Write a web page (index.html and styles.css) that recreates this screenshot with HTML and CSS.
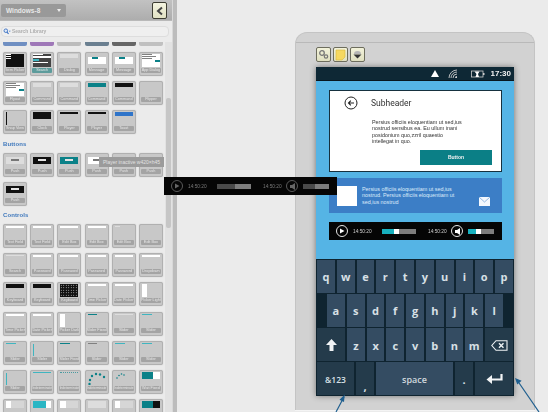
FILE: index.html
```html
<html>
<head>
    <title>Windows-8 wireframes</title>
    <link rel="stylesheet" href="styles.css">
</head>
<body>
<div class="app">
    <div class="sidebar">
        <div class="toolbar">
            <div class="select">Windows-8<span class="select-dot"></span></div>
            <div class="collapse">
                <svg width="8" height="10" viewBox="0 0 8 10"><path d="M6 1.5 2 5l4 3.5" fill="none" stroke="#444" stroke-width="2"/></svg>
            </div>
        </div>
        <div class="search-wrap">
            <div class="search">
                <svg width="8" height="7" viewBox="0 0 10 9"><circle cx="3.5" cy="3.5" r="2.3" fill="#dfe9f7" stroke="#3f74c4" stroke-width="1.2"/><path d="M5 5.2 7 7.6" stroke="#3f74c4" stroke-width="1.4"/><path d="M7.5 3.5h2.2L8.6 5z" fill="#3f74c4"/></svg>
                Search Library
            </div>
        </div>
        <div class="lib">
            <div class="lib-list">
                <div class="grid peek">
                    <div class="peek-item c1"></div>
                    <div class="peek-item c2"></div>
                    <div class="peek-item c3"></div>
                    <div class="peek-item c4"></div>
                    <div class="peek-item c5"></div>
                    <div class="peek-item c6"></div>
                </div>

                <div class="grid">
                    <div class="thumb"><div class="pv bk"><i class="wh h1 w3"></i><i class="wh h1 w3"></i><i class="wh h1 w3"></i></div><div class="lb">Item Picker</div></div>
                    <div class="thumb"><div class="pv dk"><i class="wh h1 w6"></i><i class="wh"></i><i class="cy w3"></i><i class="wh h1 w9"></i></div><div class="lb te">Search</div></div>
                    <div class="thumb"><div class="pv"><i class="lt h4"></i></div><div class="lb">Dialog</div></div>
                    <div class="thumb"><div class="pv"><i class="wh h6 mid msg"></i></div><div class="lb">Message</div></div>
                    <div class="thumb"><div class="pv"><i class="wh h6 mid msg"></i></div><div class="lb">Message</div></div>
                    <div class="thumb"><div class="pv wh"><i class="gr h1 w6"></i><i class="gr h1 w9"></i><i class="gr h1 w6"></i><i class="te w3 right"></i></div><div class="lb">App Dialog</div></div>
                </div>
                <div class="grid">
                    <div class="thumb"><div class="pv wh"><i class="gr h1 w6"></i><i class="gr h1 w9"></i><i class="gr h1 w6"></i><i class="te w3 right"></i></div><div class="lb">Flyout</div></div>
                    <div class="thumb"><div class="pv"><i class="lt h4"></i></div><div class="lb">Command</div></div>
                    <div class="thumb"><div class="pv"><i class="lt h4"></i></div><div class="lb">Command</div></div>
                    <div class="thumb"><div class="pv"><i class="te h4"></i></div><div class="lb">Command</div></div>
                    <div class="thumb"><div class="pv"><i class="bk h4"></i></div><div class="lb">Command</div></div>
                    <div class="thumb"><div class="pv"></div><div class="lb">Flipper</div></div>
                </div>
                <div class="grid">
                    <div class="thumb"><div class="pv"><i class="bk snap"></i></div><div class="lb">Snap View</div></div>
                    <div class="thumb"><div class="pv"><i class="bk h6"></i></div><div class="lb">Clock</div></div>
                    <div class="thumb"><div class="pv"><i class="bk"></i></div><div class="lb">Player</div></div>
                    <div class="thumb"><div class="pv"><i class="bk"></i></div><div class="lb">Player</div></div>
                    <div class="thumb"><div class="pv"><i class="bl h4"></i></div><div class="lb">Toast</div></div>
                </div>

                <h4 class="group">Buttons</h4>
                <div class="grid">
                    <div class="thumb"><div class="pv"><i class="lt h6 btn"></i></div><div class="lb">Push</div></div>
                    <div class="thumb"><div class="pv"><i class="bk h6 btn"></i></div><div class="lb">Push</div></div>
                    <div class="thumb"><div class="pv"><i class="te h6 btn"></i></div><div class="lb">Push</div></div>
                    <div class="thumb"><div class="pv"><i class="wh h6 btn"></i></div><div class="lb">Push</div></div>
                    <div class="thumb"><div class="pv"><i class="bk h6 btn"></i></div><div class="lb">Push</div></div>
                    <div class="thumb"><div class="pv"><i class="lt h6 btn"></i></div><div class="lb">Push</div></div>
                    <div class="thumb"><div class="pv"><i class="bk h6 btn"></i></div><div class="lb">Push</div></div>
                </div>

                <h4 class="group">Controls</h4>
                <div class="grid">
                    <div class="thumb"><div class="pv"><i class="wh"></i></div><div class="lb">Text Field</div></div>
                    <div class="thumb"><div class="pv"><i class="wh"></i></div><div class="lb">Text Field</div></div>
                    <div class="thumb"><div class="pv"><i class="wh"></i></div><div class="lb">Edit Box</div></div>
                    <div class="thumb"><div class="pv"><i class="wh"></i></div><div class="lb">Edit Box</div></div>
                    <div class="thumb"><div class="pv"><i class="lt h1 w3"></i></div><div class="lb">Edit Box</div></div>
                    <div class="thumb"><div class="pv"></div><div class="lb">Edit Box</div></div>
                </div>
                <div class="grid">
                    <div class="thumb"><div class="pv"><i class="lt h1"></i></div><div class="lb">Search</div></div>
                    <div class="thumb"><div class="pv"><i class="wh"></i></div><div class="lb">Password</div></div>
                    <div class="thumb"><div class="pv"><i class="wh"></i></div><div class="lb">Password</div></div>
                    <div class="thumb"><div class="pv"><i class="wh"></i></div><div class="lb">Password</div></div>
                    <div class="thumb"><div class="pv"><i class="wh"></i></div><div class="lb">Password</div></div>
                    <div class="thumb"><div class="pv"><i class="wh"></i></div><div class="lb">Dropdown</div></div>
                </div>
                <div class="grid">
                    <div class="thumb"><div class="pv"><i class="bk h4"></i></div><div class="lb">Keyboard</div></div>
                    <div class="thumb"><div class="pv"><i class="bk h4"></i></div><div class="lb">Keyboard</div></div>
                    <div class="thumb"><div class="pv bk keys"></div><div class="lb">Keyboard</div></div>
                    <div class="thumb"><div class="pv"><i class="wh"></i></div><div class="lb">Time Picker</div></div>
                    <div class="thumb"><div class="pv"><i class="wh"></i></div><div class="lb">Date Picker</div></div>
                    <div class="thumb"><div class="pv"><i class="wh pick"></i></div><div class="lb">Picker Light</div></div>
                </div>
                <div class="grid">
                    <div class="thumb"><div class="pv"><i class="wh"></i></div><div class="lb">Time Picker</div></div>
                    <div class="thumb"><div class="pv"><i class="wh"></i></div><div class="lb">Date Picker</div></div>
                    <div class="thumb"><div class="pv"><i class="wh pick"></i></div><div class="lb">Picker Dark</div></div>
                    <div class="thumb"><div class="pv"><i class="te h1 w6"></i></div><div class="lb">Slider Fixed</div></div>
                    <div class="thumb"><div class="pv"><i class="lt h1"></i></div><div class="lb">Slider</div></div>
                    <div class="thumb"><div class="pv"><i class="cy h1 w6"></i></div><div class="lb">Slider</div></div>
                </div>
                <div class="grid">
                    <div class="thumb"><div class="pv"><i class="cy h1 w6"></i></div><div class="lb">Slider</div></div>
                    <div class="thumb"><div class="pv"><i class="cy vert"></i></div><div class="lb">Slider</div></div>
                    <div class="thumb"><div class="pv"><i class="te h1 w6"></i></div><div class="lb">Slider Fixed</div></div>
                    <div class="thumb"><div class="pv"><i class="gr h1 w6"></i></div><div class="lb">Slider</div></div>
                    <div class="thumb"><div class="pv"><i class="cy h1 w6"></i></div><div class="lb">Slider</div></div>
                    <div class="thumb"><div class="pv"><i class="cy h1 w6"></i></div><div class="lb">Slider</div></div>
                </div>
                <div class="grid">
                    <div class="thumb"><div class="pv"><i class="cy vert"></i></div><div class="lb">Slider</div></div>
                    <div class="thumb"><div class="pv"><i class="cy h1"></i></div><div class="lb tiny">Indeterminate</div></div>
                    <div class="thumb"><div class="pv"><i class="dots"></i></div><div class="lb tiny">Indeterminate</div></div>
                    <div class="thumb"><div class="pv"><svg width="18" height="14" viewBox="0 0 18 14"><g fill="#0b8188"><circle cx="1.5" cy="12" r="1.2"/><circle cx="2" cy="8" r="1.2"/><circle cx="4" cy="4" r="1.2"/><circle cx="8" cy="2" r="1.2"/><circle cx="12" cy="2.500" r="1.2"/><circle cx="16" cy="5" r="1.2"/></g></svg></div><div class="lb tiny">Indeterminate</div></div>
                    <div class="thumb"><div class="pv"><svg width="18" height="14" viewBox="0 0 18 14"><g fill="#0b8188"><circle cx="2" cy="6" r=".8"/><circle cx="4" cy="3.500" r=".8"/><circle cx="6.500" cy="2" r=".8"/><circle cx="9" cy="3" r=".8"/></g></svg></div><div class="lb tiny">Indeterminate</div></div>
                    <div class="thumb"><div class="pv"><i class="wh h6 meter"><b></b></i></div><div class="lb">Wait Fixed</div></div>
                </div>
                <div class="grid">
                    <div class="thumb"><div class="pv"><i class="lt h6 meter soft"><b class="white-cap"></b></i></div></div>
                    <div class="thumb"><div class="pv"><i class="wh h6 meter"><b class="cyan"></b></i></div></div>
                    <div class="thumb"><div class="pv"><i class="lt h6 meter soft"><b class="white-cap"></b></i></div></div>
                    <div class="thumb"><div class="pv"><i class="lt h6"></i></div></div>
                    <div class="thumb"><div class="pv"><i class="lt h6 meter soft"><b class="white-cap"></b></i></div></div>
                    <div class="thumb"><div class="pv"><i class="bk h6 meter"><b></b></i></div></div>
                </div>
            </div>
            <div class="scroll"><div class="scroll-thumb"></div></div>
        </div>
    </div>
    <div class="divider"></div>

    <div class="canvas">
        <div class="device">
            <div class="device-head"></div>
            <div class="device-body">
                <div class="tools">
                    <div class="tool"><svg width="11" height="11" viewBox="0 0 11 11"><circle cx="4" cy="4" r="2.300" fill="none" stroke="#777" stroke-width="1.300"/><circle cx="8" cy="7.500" r="1.700" fill="none" stroke="#777" stroke-width="1.200"/></svg></div>
                    <div class="tool"><svg width="11" height="12" viewBox="0 0 11 12"><path d="M1 1h9v7l-3 3H1z" fill="#f6d860" stroke="#d9b93d" stroke-width=".6"/></svg></div>
                    <div class="tool"><svg width="11" height="11" viewBox="0 0 11 11"><path d="M2 5a3.500 3 0 0 1 7 0z" fill="#b5b5b5"/><path d="M1.500 5.500h8L5.500 9.500z" fill="#333"/></svg></div>
                </div>
                <div class="screen">
                    <div class="status">
                        <svg width="8" height="7" viewBox="0 0 8 7"><path d="M4 0 8 7H0z" fill="#fff"/></svg>
                        <svg class="st-wifi" width="10" height="9" viewBox="0 0 10 9"><g fill="none" stroke="#ccc" stroke-width=".9"><path d="M1 9a8 8 0 0 1 8-8"/><path d="M3 9a6 6 0 0 1 6-6"/><path d="M5 9a4 4 0 0 1 4-4"/></g><path d="M7 9a2 2 0 0 1 2-2v2z" fill="#ccc"/></svg>
                        <svg class="st-batt" width="14" height="8" viewBox="0 0 14 8"><rect x=".5" y="1" width="11.500" height="6" fill="none" stroke="#ccc" stroke-width=".8"/><rect x="12" y="3" width="1.500" height="2" fill="#ccc"/><path d="M3.500 1.500h5L7 4l1 3H4.500L5.500 4z" fill="#fff"/></svg>
                        <span class="clock">17:30</span>
                    </div>
                    <div class="blue">
                        <div class="card">
                            <div class="card-head">
                                <svg width="14" height="14" viewBox="0 0 14 14"><circle cx="7" cy="7" r="6" fill="none" stroke="#222" stroke-width="1"/><path d="M10 7H4.500M6.800 4.700 4.500 7l2.300 2.300" fill="none" stroke="#222" stroke-width="1.100"/></svg>
                                <span class="subheader">Subheader</span>
                            </div>
                            <p class="card-text">Persius officiis eloquentiam ut sed,ius nostrud sensibus ea. Eu ullum inani posidonium quo,zzril quaestio intellegat in quo.</p>
                            <div class="card-foot"><div class="button">Button</div></div>
                        </div>
                        <div class="panel">
                            <div class="panel-img"></div>
                            <p class="panel-text">Persius officiis eloquentiam ut sed,ius nostrud. Persius officiis eloquentiam ut sed,ius nostrud</p>
                            <svg class="mail" width="11" height="9" viewBox="0 0 11 9"><rect width="11" height="9" fill="#f4f8fd"/><path d="M0 0l5.500 5L11 0" fill="none" stroke="#7fa8d8" stroke-width=".8"/></svg>
                        </div>
                        <div class="player">
                            <span class="p-icon"><svg width="6" height="6" viewBox="0 0 6 6"><path d="M1 .5 5.500 3 1 5.500z" fill="#fff"/></svg></span>
                            <span class="p-time">14:50:20</span>
                            <span class="p-bar long"><b></b><u></u></span>
                            <span class="p-time second">14:50:20</span>
                            <span class="p-icon"><svg width="7" height="7" viewBox="0 0 7 7"><path d="M6 0v7L3 5H1V2h2z" fill="#fff"/></svg></span>
                            <span class="p-bar short"><b></b><u></u></span>
                        </div>
                    </div>
                    <div class="keyboard">
                        <div class="kb-row">
                            <span class="key">q</span><span class="key">w</span><span class="key">e</span><span class="key">r</span><span class="key">t</span><span class="key">y</span><span class="key">u</span><span class="key">i</span><span class="key">o</span><span class="key">p</span>
                        </div>
                        <div class="kb-row home">
                            <span class="key">a</span><span class="key">s</span><span class="key">d</span><span class="key">f</span><span class="key">g</span><span class="key">h</span><span class="key">j</span><span class="key">k</span><span class="key">l</span>
                        </div>
                        <div class="kb-row">
                            <span class="key fn wide"><svg width="11" height="12" viewBox="0 0 11 12"><path d="M5.500 0 11 6H7.500v6h-4V6H0z" fill="#f0f3f5"/></svg></span>
                            <span class="key">z</span><span class="key">x</span><span class="key">c</span><span class="key">v</span><span class="key">b</span><span class="key">n</span><span class="key">m</span>
                            <span class="key fn wide"><svg width="17" height="11" viewBox="0 0 17 11"><path d="M5 .7h11v9.600H5L.8 5.500z" fill="none" stroke="#eef2f4" stroke-width="1.100"/><path d="M8 3.200l4.500 4.600M12.500 3.200 8 7.800" stroke="#eef2f4" stroke-width="1.400"/></svg></span>
                        </div>
                        <div class="kb-row">
                            <span class="key fn sym">&amp;123</span>
                            <span class="key fn punct low">,</span>
                            <span class="key space">space</span>
                            <span class="key fn punct">.</span>
                            <span class="key fn enter"><svg width="17" height="10" viewBox="0 0 17 10"><path d="M15.500 0v5.500H4" fill="none" stroke="#f2f4f5" stroke-width="2.200"/><path d="M6 1 .5 5.500 6 10z" fill="#f2f4f5"/></svg></span>
                        </div>
                    </div>
                </div>
            </div>
        </div>
    </div>

    <svg class="arrows" width="548" height="412" viewBox="0 0 548 412">
        <g stroke="#1f5f8f" stroke-width="1.200" fill="#1f5f8f">
            <path d="M336 412 344 397" fill="none"/>
            <path d="M344 396l-.5 5-3-1.500z"/>
            <path d="M539 412 517 380" fill="none"/>
            <path d="M516 379l4.500 2-3 2.500z"/>
        </g>
    </svg>

    <div class="tooltip">Player inactive w420×h45</div>

    <div class="player ghost">
        <span class="p-icon"><svg width="6" height="6" viewBox="0 0 6 6"><path d="M1 .5 5.500 3 1 5.500z" fill="#666"/></svg></span>
        <span class="p-time">14:50:20</span>
        <span class="p-bar long"><b></b></span>
        <span class="p-time second">14:50:20</span>
        <span class="p-icon"><svg width="7" height="7" viewBox="0 0 7 7"><path d="M6 0v7L3 5H1V2h2z" fill="#666"/></svg></span>
        <span class="p-bar short"><b></b></span>
    </div>
</div>
</body>
</html>
```

FILE: styles.css
```css
html, body { margin: 0; padding: 0; width: 548px; height: 412px; overflow: hidden; }
body { font-family: "Liberation Sans", Arial, sans-serif; background-color: #ebebeb; }
.app { position: relative; display: flex; width: 548px; height: 412px; overflow: hidden; filter: blur(0.4px); }

/* library */
.sidebar { width: 172px; flex: none; background-color: #ebebeb; display: flex; flex-direction: column; }
.toolbar { height: 21px; flex: none; display: flex; align-items: center; justify-content: space-between; padding: 0 5px 0 1px; box-sizing: border-box; background: linear-gradient(#c2c2c2, #adadad); border-bottom: 1px solid #b9b9b9; }
.select { width: 65px; height: 13px; line-height: 13px; margin-top: 1px; box-sizing: border-box; padding-left: 5px; display: flex; justify-content: space-between; align-items: center; background-color: #999999; border-radius: 2px; color: #e8e8e8; font-size: 6.500px; font-weight: bold; }
.select-dot { width: 0; height: 0; margin-right: 5px; border: 2px solid transparent; border-top: 3px solid #eeeeee; border-bottom: 0; }
.collapse { width: 15px; height: 17px; margin-top: 1px; box-sizing: border-box; display: flex; align-items: center; justify-content: center; background: linear-gradient(#f4f4e0, #e2e2c4); border: 1px solid #3d3d32; border-radius: 2px; }
.search-wrap { padding: 5px 3px 0 1px; flex: none; }
.search { height: 9px; display: flex; align-items: center; gap: 1px; padding-left: 1px; background-color: #efefef; border: 1px solid #dddddd; border-radius: 4px; color: #adadad; font-size: 4.900px; font-weight: bold; }

.lib { flex: 1; display: flex; min-height: 0; padding-top: 5px; }
.lib-list { width: 165px; flex: none; padding-left: 3px; box-sizing: border-box; }
.grid { display: grid; grid-template-columns: repeat(6, 24px); column-gap: 3.200px; row-gap: 5.200px; margin-bottom: 5.200px; }
.peek { margin-bottom: 6px; }
.peek-item { height: 4px; border-radius: 0 0 2px 2px; background-color: #b4b4b4; }
.peek-item.c1 { background-color: #6f8fc2; }
.peek-item.c2 { background-color: #9f78b8; }
.peek-item.c3 { background-color: #bcbcbc; }
.peek-item.c4 { background-color: #6a7f90; }
.peek-item.c5 { background-color: #666666; }
.peek-item.c6 { background-color: #c0c0c0; }

.group { margin: 0 0 4px; font-size: 6px; line-height: 9px; letter-spacing: 0.1px; color: #3f78bc; }

.thumb { height: 24px; box-sizing: border-box; padding: 1px 2px 2px; display: flex; flex-direction: column; border: 1px solid #b0b0b0; border-radius: 2px; background-color: #c8c8c8; box-shadow: 0 0 1px #b0b0b0; }
.pv { flex: 1; min-height: 0; overflow: hidden; position: relative; margin-bottom: 1px; }
.pv i { display: block; height: 2px; margin-bottom: 1px; }
.pv svg { display: block; }
.lb { height: 5px; flex: none; margin: 0 -1px; background-color: #a4a4a4; color: #e6e6e6; font-size: 3.800px; line-height: 5px; text-align: center; white-space: nowrap; border-radius: 1px; }
.lb.tiny { font-size: 3.200px; }
.lb.te { background-color: #5d9c9c; }

.wh { background-color: #ffffff; }
.bk { background-color: #111111; }
.dk { background-color: #444444; }
.lt { background-color: #dddddd; }
.te { background-color: #0b8188; }
.cy { background-color: #3fb5c0; }
.gr { background-color: #808080; }
.bl { background-color: #2f74c9; }
.pv i.h1 { height: 1px; }
.pv i.h4 { height: 4px; }
.pv i.h6 { height: 7px; }
.w3 { width: 30%; }
.w6 { width: 55%; }
.w9 { width: 80%; }
.right { margin-left: auto; }
.pv i.mid { margin-top: 1px; }
.pv i.msg::after { content: ""; display: block; width: 6px; height: 2px; margin: 3px 0 0 4px; background-color: #0b8188; }
.pv i.btn { margin: 2px 0 0; }
.pv i.btn::after { content: ""; display: block; width: 8px; height: 2px; margin: 0 auto; position: relative; top: 2.500px; background-color: #e4e4e4; }
.pv i.lt.btn::after, .pv i.wh.btn::after { background-color: #777777; }
.pv i.snap { width: 1px; height: 15px; }
.pv i.vert { width: 1px; height: 14px; margin-top: 1px; }
.pv i.pick { width: 5px; height: 15px; }
.pv i.dots { height: 1px; border-top: 1px dotted #4a9aa0; }
.pv.keys { background-image: radial-gradient(#dddddd 0.6px, transparent 0.7px); background-size: 2.500px 2.500px; }
.meter { display: flex; }
.meter b { display: block; width: 60%; height: 100%; background-color: #0b8188; }
.meter b.cyan { background-color: #2bb6c4; width: 70%; }
.meter b.white-cap { background-color: #ffffff; width: 30%; }
.meter.soft { background-color: #d6d6d6; }

.scroll { width: 7px; flex: none; background-color: #e2e2e2; }
.scroll-thumb { width: 5px; height: 130px; margin: 56px 0 0 1px; background-color: #c6c6c6; border-radius: 2px; }

.divider { width: 5px; flex: none; background-color: #bcbcbc; border-left: 1px solid #d8d8d8; box-sizing: border-box; }

/* canvas */
.canvas { flex: 1; min-width: 0; padding: 32px 0 0 118px; background-color: #ebebeb; box-sizing: border-box; }
.device { width: 240px; height: 378px; box-sizing: border-box; background-color: #d2d2d2; border: 1px solid #c4c4c4; border-bottom: 0; border-radius: 12px 12px 0 0; box-shadow: 0 1px 0 #f4f4f4; }
.device-head { height: 9px; border-bottom: 1px solid #b9b9b9; }
.device-body { padding: 4px 0 0 20px; }
.tools { display: flex; gap: 2px; height: 15px; margin-bottom: 5px; }
.tool { width: 15px; height: 15px; box-sizing: border-box; display: flex; align-items: center; justify-content: center; background: linear-gradient(#f2f2da, #e0e0c0); border: 1px solid #6d6d5d; border-radius: 2px; }

.screen { width: 198px; height: 329px; display: flex; flex-direction: column; box-shadow: 0 0 6px rgba(0, 0, 0, 0.45); }
.status { height: 14px; flex: none; box-sizing: border-box; display: flex; align-items: center; justify-content: flex-end; padding-right: 3px; background-color: #0e2835; border-bottom: 1px solid #07161e; }
.st-wifi { margin-left: 9px; }
.st-batt { margin-left: 13px; }
.clock { margin-left: 6px; color: #f2f2f2; font-size: 8px; font-weight: bold; }

.blue { flex: none; height: 178px; box-sizing: border-box; padding: 9px 12px 0 13px; background-color: #55b4e5; display: flex; flex-direction: column; }
.card { height: 82px; flex: none; box-sizing: border-box; background-color: #ffffff; border: 1px solid #16313f; padding: 5px 9px 0 14px; display: flex; flex-direction: column; }
.card-head { display: flex; align-items: center; height: 14px; }
.subheader { margin-left: 13px; font-family: Roboto, "Liberation Sans", sans-serif; font-size: 8.500px; color: #333333; }
.card-text { margin: 9px 0 0 28px; width: 90px; color: #333333; font-size: 5.400px; line-height: 6.300px; }
.card-foot { display: flex; justify-content: flex-end; margin-top: 6px; }
.button { width: 72px; height: 15px; line-height: 15px; text-align: center; background-color: #0b7f86; color: #f2f2f2; font-size: 5px; font-weight: bold; }

.panel { margin-top: 6px; height: 35px; flex: none; box-sizing: border-box; display: flex; padding: 8px 12px 0 8px; background-color: #3c7ec6; position: relative; }
.panel-img { width: 20px; height: 20px; flex: none; background-color: #ffffff; }
.panel-text { margin: 0 0 0 5px; width: 96px; color: #dcebfa; font-size: 5.400px; line-height: 6.300px; }
.mail { margin: 11px 0 0 auto; }

.player { width: 173px; height: 18px; flex: none; margin-top: 9px; box-sizing: border-box; display: flex; align-items: center; padding-left: 7px; background-color: #050505; }
.p-icon { width: 12px; height: 12px; flex: none; box-sizing: border-box; display: flex; align-items: center; justify-content: center; border: 1px solid #e6e6e6; border-radius: 50%; }
.p-time { width: 18px; margin-left: 5px; flex: none; color: #cfcfcf; font-size: 4.800px; white-space: nowrap; }
.p-time.second { margin: 0 5px 0 12px; }
.p-bar { display: flex; height: 5px; flex: none; margin-left: 11px; background-color: #7d7d7d; }
.p-bar b { display: block; background-color: #17b1bf; }
.p-bar u { display: block; width: 5px; background-color: #ffffff; }
.p-bar.long { width: 34px; }
.p-bar.long b { width: 12px; }
.p-bar.short { width: 26px; margin-left: 5px; }
.p-bar.short b { width: 8px; }

.keyboard { flex: 1; min-height: 0; box-sizing: border-box; padding: 1px; display: flex; flex-direction: column; gap: 1.600px; background-color: #0f2430; }
.kb-row { flex: 1; display: flex; gap: 2px; }
.kb-row.home { padding: 0 10px; }
.key { flex: 1; padding-top: 1px; box-sizing: border-box; display: flex; align-items: center; justify-content: center; background-color: #344c62; color: #d8e0e6; font-family: "Open Sans", "Noto Sans", sans-serif; font-size: 11px; font-weight: 700; }
.key.fn { background-color: #243b4b; }
.key.wide { flex: none; width: 28px; }
.key.sym { flex: none; width: 37px; font-size: 8.500px; font-weight: 600; }
.key.punct { flex: none; width: 18px; }
.key.low { align-items: flex-end; padding-bottom: 1px; }
.key.space { flex: none; width: 77px; font-size: 9px; font-weight: 600; color: #d0d8de; }
.key.enter { flex: none; width: 38px; }

/* things lying over the layout */
.arrows { position: absolute; left: 0; top: 0; pointer-events: none; }
.tooltip { position: absolute; left: 99px; top: 157px; width: 65px; height: 10px; line-height: 10px; text-align: center; white-space: nowrap; background-color: #9b9b9b; color: #e2e2e2; font-size: 5px; }
.player.ghost { position: absolute; left: 164px; top: 177px; margin: 0; background-color: #060606; }
.ghost .p-icon { border-color: #5a5a5a; }
.ghost .p-time { color: #7a7a7a; }
.ghost .p-bar { background-color: #7d7d7d; }
.ghost .p-bar b { background-color: #4a4a4a; }
.ghost .p-bar.long b { width: 18px; }
.ghost .p-bar.short b { width: 12px; }
```
